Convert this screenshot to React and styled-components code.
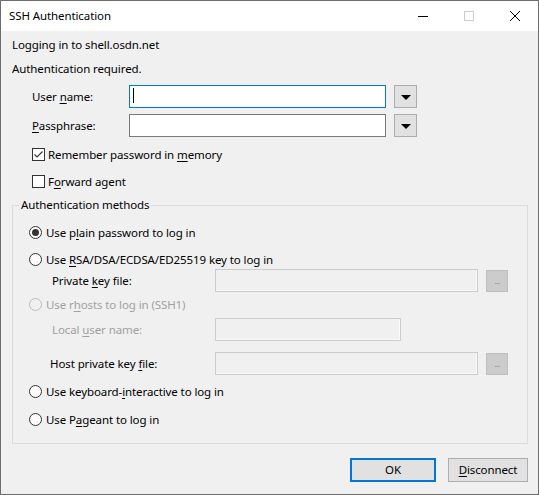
import React from 'react';
import styled, { createGlobalStyle } from 'styled-components';

const GlobalStyle = createGlobalStyle`
  html, body {
    margin: 0;
    padding: 0;
    background: #f0f0f0;
  }
  body {
    font-family: "Noto Sans", "Open Sans", sans-serif;
    font-size: 11.5px;
    letter-spacing: -0.1px;
    color: #000;
  }
  * {
    box-sizing: border-box;
  }
`;

const Window = styled.div`
  width: 539px;
  height: 495px;
  border: 1px solid #6d6d6d;
  background: #f0f0f0;
  display: flex;
  flex-direction: column;
`;

const TitleBar = styled.div`
  height: 30px;
  background: #fff;
  display: flex;
  align-items: center;
`;

const Title = styled.div`
  flex: 1;
  padding-left: 8px;
  line-height: 16px;
`;

const Controls = styled.div`
  display: flex;
  height: 100%;
`;

const CtrlButton = styled.div`
  width: 46px;
  height: 100%;
  display: flex;
  align-items: center;
  justify-content: center;
`;

const Body = styled.div`
  flex: 1;
  display: flex;
  flex-direction: column;
  padding: 6px 10px 11px 11px;
`;

const Line = styled.div`
  height: 16px;
  line-height: 16px;
  margin-bottom: 8px;
`;

const Key = styled.span`
  text-decoration: underline;
  text-decoration-thickness: 1px;
  text-underline-offset: 2px;
`;

const Text = styled.span`
  white-space: pre;
`;

const FieldRow = styled.div`
  display: flex;
  align-items: center;
  height: 23px;
  margin-top: ${(p) => p.$mt || 0}px;
`;

const FieldLabel = styled.div`
  width: ${(p) => p.$w}px;
  padding-left: ${(p) => p.$indent}px;
  line-height: 16px;
  color: ${(p) => (p.$disabled ? '#a0a0a0' : '#000')};
  flex-shrink: 0;
`;

const TextBox = styled.div`
  position: relative;
  width: ${(p) => p.$w}px;
  height: 23px;
  background: ${(p) => (p.$disabled ? '#f0f0f0' : '#fff')};
  border: 1px solid ${(p) => (p.$focused ? '#0078d7' : p.$disabled ? '#cccccc' : '#7a7a7a')};
  box-shadow: ${(p) => (p.$disabled ? 'inset -1px -1px 0 #fafafa' : 'none')};
`;

const Caret = styled.span`
  position: absolute;
  left: 3px;
  top: 2px;
  width: 1px;
  height: 15px;
  background: #000;
`;

const DropButton = styled.div`
  width: 23px;
  height: 23px;
  margin-left: 8px;
  background: #e1e1e1;
  border: 1px solid #adadad;
  display: flex;
  align-items: center;
  justify-content: center;
`;

const Triangle = styled.span`
  width: 0;
  height: 0;
  border-left: 5px solid transparent;
  border-right: 5px solid transparent;
  border-top: 5px solid #000;
  margin-top: 1px;
`;

const BrowseButton = styled.div`
  width: 22px;
  height: 22px;
  margin-left: 8px;
  background: #cccccc;
  border: 1px solid #bfbfbf;
  color: #8c8c8c;
  font-size: 9px;
  display: flex;
  align-items: center;
  justify-content: center;
  letter-spacing: -0.5px;
`;

const CheckRow = styled.label`
  display: flex;
  align-items: center;
  height: 17px;
  line-height: 16px;
  padding-left: 20px;
  margin-top: ${(p) => p.$mt || 0}px;
`;

const CheckBox = styled.span`
  width: 13px;
  height: 13px;
  border: 1px solid #333;
  background: #fff;
  margin-right: 3px;
  display: flex;
  align-items: center;
  justify-content: center;
`;

const Group = styled.fieldset`
  margin: 7px 0 0 0;
  padding: 0 0 15px 0;
  border: 1px solid #dcdcdc;
  display: flex;
  flex-direction: column;
`;

const Legend = styled.legend`
  margin-left: 6px;
  padding: 0 2px;
  line-height: 16px;
`;

const RadioRow = styled.div`
  display: flex;
  align-items: center;
  height: 17px;
  line-height: 16px;
  padding-left: 16px;
  margin-top: ${(p) => p.$mt || 0}px;
  color: ${(p) => (p.$disabled ? '#a0a0a0' : '#000')};
`;

const Radio = styled.span`
  width: 13px;
  height: 13px;
  border-radius: 50%;
  border: 1px solid ${(p) => (p.$disabled ? '#bcbcbc' : '#333')};
  background: ${(p) => (p.$disabled ? '#f0f0f0' : '#fff')};
  margin-right: 4px;
  display: flex;
  align-items: center;
  justify-content: center;
  &::after {
    content: '';
    display: ${(p) => (p.$checked ? 'block' : 'none')};
    width: 7px;
    height: 7px;
    border-radius: 50%;
    background: #333;
  }
`;

const Footer = styled.div`
  display: flex;
  justify-content: flex-end;
  gap: 12px;
  margin-top: 14px;
`;

const PushButton = styled.div`
  width: ${(p) => p.$w}px;
  height: 24px;
  background: #e1e1e1;
  border: ${(p) => (p.$default ? '2px solid #0078d7' : '1px solid #adadad')};
  display: flex;
  align-items: center;
  justify-content: center;
  line-height: 16px;
`;

function MinIcon() {
  return (
    <svg width="10" height="10" viewBox="0 0 10 10">
      <path d="M0 5.5H10" stroke="#000" strokeWidth="1" />
    </svg>
  );
}

function MaxIcon() {
  return (
    <svg width="10" height="10" viewBox="0 0 10 10">
      <rect x="0.5" y="0.5" width="9" height="9" fill="none" stroke="#cccccc" strokeWidth="1" />
    </svg>
  );
}

function CloseIcon() {
  return (
    <svg width="10" height="10" viewBox="0 0 10 10">
      <path d="M0 0L10 10M10 0L0 10" stroke="#000" strokeWidth="1" />
    </svg>
  );
}

function Check() {
  return (
    <svg width="11" height="11" viewBox="0 0 11 11">
      <path d="M1.5 5.5L4 8L9.5 2.5" fill="none" stroke="#333" strokeWidth="1.1" />
    </svg>
  );
}

export default function App() {
  return (
    <>
      <GlobalStyle />
      <Window>
        <TitleBar>
          <Title>SSH Authentication</Title>
          <Controls>
            <CtrlButton><MinIcon /></CtrlButton>
            <CtrlButton><MaxIcon /></CtrlButton>
            <CtrlButton><CloseIcon /></CtrlButton>
          </Controls>
        </TitleBar>
        <Body>
          <Line>Logging in to shell.osdn.net</Line>
          <Line>Authentication required.</Line>

          <FieldRow>
            <FieldLabel $w={117} $indent={20}>User <Key>n</Key>ame:</FieldLabel>
            <TextBox $w={257} $focused><Caret /></TextBox>
            <DropButton><Triangle /></DropButton>
          </FieldRow>
          <FieldRow $mt={6}>
            <FieldLabel $w={117} $indent={20}><Key>P</Key>assphrase:</FieldLabel>
            <TextBox $w={257} />
            <DropButton><Triangle /></DropButton>
          </FieldRow>

          <CheckRow $mt={9}>
            <CheckBox><Check /></CheckBox>
            <Text>Remember password in <Key>m</Key>emory</Text>
          </CheckRow>
          <CheckRow $mt={10}>
            <CheckBox />
            <Text>F<Key>o</Key>rward agent</Text>
          </CheckRow>

          <Group>
            <Legend>Authentication methods</Legend>
            <RadioRow $mt={11}>
              <Radio $checked />
              <Text>Use p<Key>l</Key>ain password to log in</Text>
            </RadioRow>
            <RadioRow $mt={10}>
              <Radio />
              <Text>Use <Key>R</Key>SA/DSA/ECDSA/ED25519 key to log in</Text>
            </RadioRow>
            <FieldRow $mt={1}>
              <FieldLabel $w={202} $indent={39}>Private <Key>k</Key>ey file:</FieldLabel>
              <TextBox $w={263} $disabled />
              <BrowseButton>...</BrowseButton>
            </FieldRow>
            <RadioRow $mt={4} $disabled>
              <Radio $disabled />
              <Text>Use r<Key>h</Key>osts to log in (SSH1)</Text>
            </RadioRow>
            <FieldRow $mt={5}>
              <FieldLabel $w={202} $indent={39} $disabled>Local <Key>u</Key>ser name:</FieldLabel>
              <TextBox $w={186} $disabled />
            </FieldRow>
            <FieldRow $mt={11}>
              <FieldLabel $w={202} $indent={37}>Host private key <Key>f</Key>ile:</FieldLabel>
              <TextBox $w={263} $disabled />
              <BrowseButton>...</BrowseButton>
            </FieldRow>
            <RadioRow $mt={8}>
              <Radio />
              <Text>Use keyboard-<Key>i</Key>nteractive to log in</Text>
            </RadioRow>
            <RadioRow $mt={11}>
              <Radio />
              <Text>Use P<Key>a</Key>geant to log in</Text>
            </RadioRow>
          </Group>

          <Footer>
            <PushButton $w={86} $default>OK</PushButton>
            <PushButton $w={80}><Key>D</Key>isconnect</PushButton>
          </Footer>
        </Body>
      </Window>
    </>
  );
}
